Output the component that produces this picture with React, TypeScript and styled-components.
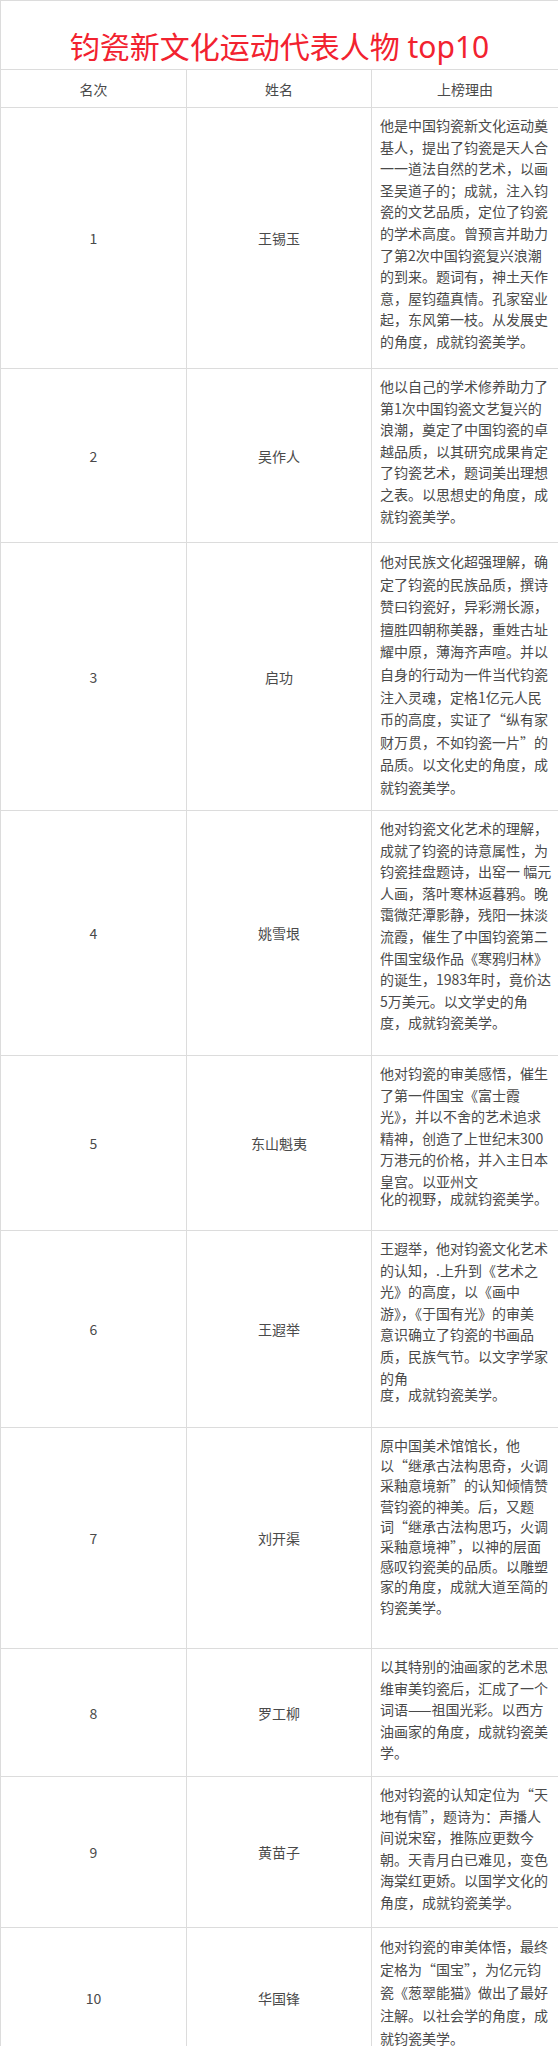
import styled, { createGlobalStyle } from "styled-components";

const GlobalStyle = createGlobalStyle`
  html, body {
    margin: 0;
    padding: 0;
    background: #fff;
  }
  body {
    font-family: "Noto Sans CJK SC", "Noto Sans", sans-serif;
  }
`;

const Table = styled.table`
  width: 558px;
  border-collapse: collapse;
  table-layout: fixed;
  color: #4a4a4a;
  font-size: 14px;
`;

const Row = styled.tr<{ $h: number }>`
  height: ${(p) => p.$h}px;
`;

const TitleCell = styled.td`
  border: 1px solid #dcdcdc;
  padding: 26px 0 0;
  text-align: center;
  vertical-align: top;
  color: #f2222f;
  font-family: "Noto Sans", "Noto Sans CJK SC", sans-serif;
  font-size: 30px;
  font-weight: 400;
  line-height: 40px;
  white-space: nowrap;
`;

const HeadCell = styled.th`
  border: 1px solid #dcdcdc;
  padding: 0;
  font-weight: 400;
  font-size: 14px;
  color: #4a4a4a;
  text-align: center;
  vertical-align: middle;
`;

const Cell = styled.td`
  border: 1px solid #dcdcdc;
  padding: 0;
  text-align: center;
  vertical-align: middle;
`;

const ReasonCell = styled.td`
  border: 1px solid #dcdcdc;
  padding: 7px 8px 0;
  vertical-align: top;
  text-align: left;
`;

const Line = styled.span<{ $tight?: boolean; $lh: number }>`
  display: block;
  white-space: nowrap;
  line-height: ${(p) => p.$lh}px;
  margin-top: ${(p) => (p.$tight ? "-5px" : "0")};
`;

type Person = {
  name: string;
  h: number;
  lh?: number;
  tight?: number;
  lines: string[];
};

const people: Person[] = [
  {
    name: "王锡玉",
    h: 261,
    lines: [
      "他是中国钧瓷新文化运动奠",
      "基人，提出了钧瓷是天人合",
      "一一道法自然的艺术，以画",
      "圣吴道子的；成就，注入钧",
      "瓷的文艺品质，定位了钧瓷",
      "的学术高度。曾预言并助力",
      "了第2次中国钧瓷复兴浪潮",
      "的到来。题词有，神土天作",
      "意，屋钧蕴真情。孔家窑业",
      "起，东风第一枝。从发展史",
      "的角度，成就钧瓷美学。",
    ],
  },
  {
    name: "吴作人",
    h: 174,
    lines: [
      "他以自己的学术修养助力了",
      "第1次中国钧瓷文艺复兴的",
      "浪潮，奠定了中国钧瓷的卓",
      "越品质，以其研究成果肯定",
      "了钧瓷艺术，题词美出理想",
      "之表。以思想史的角度，成",
      "就钧瓷美学。",
    ],
  },
  {
    name: "启功",
    h: 268,
    lh: 22.6,
    lines: [
      "他对民族文化超强理解，确",
      "定了钧瓷的民族品质，撰诗",
      "赞曰钧瓷好，异彩溯长源，",
      "擅胜四朝称美器，重姓古址",
      "耀中原，薄海齐声喧。并以",
      "自身的行动为一件当代钧瓷",
      "注入灵魂，定格1亿元人民",
      "币的高度，实证了“纵有家",
      "财万贯，不如钧瓷一片”的",
      "品质。以文化史的角度，成",
      "就钧瓷美学。",
    ],
  },
  {
    name: "姚雪垠",
    h: 245,
    lines: [
      "他对钧瓷文化艺术的理解，",
      "成就了钧瓷的诗意属性，为",
      "钧瓷挂盘题诗，出窑一 幅元",
      "人画，落叶寒林返暮鸦。晚",
      "霭微茫潭影静，残阳一抹淡",
      "流霞，催生了中国钧瓷第二",
      "件国宝级作品《寒鸦归林》",
      "的诞生，1983年时，竟价达",
      "5万美元。以文学史的角",
      "度，成就钧瓷美学。",
    ],
  },
  {
    name: "东山魁夷",
    h: 175,
    tight: 6,
    lines: [
      "他对钧瓷的审美感悟，催生",
      "了第一件国宝《富士霞",
      "光》，并以不舍的艺术追求",
      "精神，创造了上世纪末300",
      "万港元的价格，并入主日本",
      "皇宫。以亚州文",
      "化的视野，成就钧瓷美学。",
    ],
  },
  {
    name: "王遐举",
    h: 197,
    tight: 7,
    lines: [
      "王遐举，他对钧瓷文化艺术",
      "的认知，.上升到《艺术之",
      "光》的高度，以《画中",
      "游》，《于国有光》的审美",
      "意识确立了钧瓷的书画品",
      "质，民族气节。以文字学家",
      "的角",
      "度，成就钧瓷美学。",
    ],
  },
  {
    name: "刘开渠",
    h: 221,
    lh: 20.2,
    lines: [
      "原中国美术馆馆长，他",
      "以“继承古法构思奇，火调",
      "采釉意境新”的认知倾情赞",
      "营钧瓷的神美。后，又题",
      "词“继承古法构思巧，火调",
      "采釉意境神”，以神的层面",
      "感叹钧瓷美的品质。以雕塑",
      "家的角度，成就大道至简的",
      "钧瓷美学。",
    ],
  },
  {
    name: "罗工柳",
    h: 128,
    lines: [
      "以其特别的油画家的艺术思",
      "维审美钧瓷后，汇成了一个",
      "词语——祖国光彩。以西方",
      "油画家的角度，成就钧瓷美",
      "学。",
    ],
  },
  {
    name: "黄苗子",
    h: 151,
    lines: [
      "他对钧瓷的认知定位为“天",
      "地有情”，题诗为：声播人",
      "间说宋窑，推陈应更数今",
      "朝。天青月白已难见，变色",
      "海棠红更娇。以国学文化的",
      "角度，成就钧瓷美学。",
    ],
  },
  {
    name: "华国锋",
    h: 140,
    lh: 23,
    lines: [
      "他对钧瓷的审美体悟，最终",
      "定格为“国宝”，为亿元钧",
      "瓷《葱翠能猫》做出了最好",
      "注解。以社会学的角度，成",
      "就钧瓷美学。",
    ],
  },
];

export default function App() {
  return (
    <>
      <GlobalStyle />
      <Table>
        <colgroup>
          <col style={{ width: 186 }} />
          <col style={{ width: 185 }} />
          <col style={{ width: 187 }} />
        </colgroup>
        <tbody>
          <Row $h={69}>
            <TitleCell colSpan={3}>钧瓷新文化运动代表人物 top10</TitleCell>
          </Row>
          <Row $h={38}>
            <HeadCell>名次</HeadCell>
            <HeadCell>姓名</HeadCell>
            <HeadCell>上榜理由</HeadCell>
          </Row>
          {people.map((p, i) => (
            <Row $h={p.h} key={p.name}>
              <Cell>{i + 1}</Cell>
              <Cell>{p.name}</Cell>
              <ReasonCell>
                {p.lines.map((l, j) => (
                  <Line key={j} $lh={p.lh ?? 21.6} $tight={p.tight === j}>
                    {l}
                  </Line>
                ))}
              </ReasonCell>
            </Row>
          ))}
        </tbody>
      </Table>
    </>
  );
}
